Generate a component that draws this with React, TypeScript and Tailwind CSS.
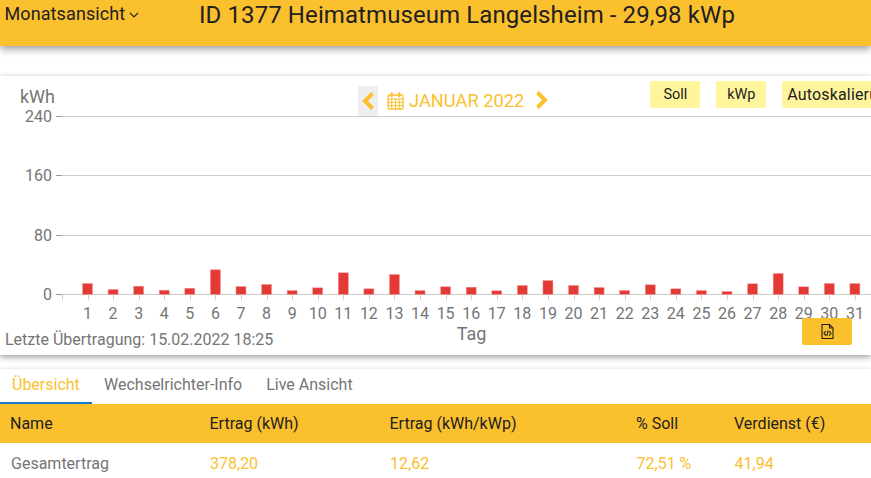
import React from "react";

const heights = [11, 5, 8.3, 4.3, 6.3, 24.7, 8, 10, 4, 6.7, 21.7, 5.7, 20, 4, 7.7, 7.3, 3.7, 9, 14, 9, 7, 4, 9.7, 5.7, 4, 3, 10.7, 21, 7.7, 11, 11];
const grid = [
  { label: "240", y: 11.5 },
  { label: "160", y: 70.5 },
  { label: "80", y: 130.5 },
  { label: "0", y: 189.5 },
];
const columns = ["Name", "Ertrag (kWh)", "Ertrag (kWh/kWp)", "% Soll", "Verdienst (€)"];
const values = ["Gesamtertrag", "378,20", "12,62", "72,51 %", "41,94"];

function Chart() {
  const baseline = 189.5;
  return (
    <svg width="871" height="240" className="block" style={{ fontFamily: "Roboto, sans-serif" }}>
      {grid.map((g) => (
        <g key={g.label}>
          <line x1="56" x2="871" y1={g.y} y2={g.y} stroke="#cccccc" />
          <line x1="56" x2="62" y1={g.y} y2={g.y} stroke="#999999" />
          <text x="52" y={g.y + 5.5} textAnchor="end" fontSize="16" fill="#757575">{g.label}</text>
        </g>
      ))}
      <line x1="62.5" x2="62.5" y1={baseline} y2={baseline + 5} stroke="#cccccc" />
      {heights.map((h, i) => {
        const cx = 87.5 + i * 25.58;
        return (
          <g key={i}>
            <rect x={cx - 5} y={baseline - h} width="10" height={h} fill="#e53935" stroke="#ef9a9a" strokeWidth="0.5" />
            <line x1={Math.round(cx) + 0.5} x2={Math.round(cx) + 0.5} y1={baseline} y2={baseline + 5} stroke="#cccccc" />
            <text x={cx} y={214} textAnchor="middle" fontSize="16" fill="#757575">{i + 1}</text>
          </g>
        );
      })}
      <text x="471.5" y="235" textAnchor="middle" fontSize="18" fill="#757575">Tag</text>
    </svg>
  );
}

function Calendar() {
  return (
    <svg width="17" height="18" viewBox="0 0 17 18" fill="none" stroke="#fbc02d" strokeWidth="1.3">
      <rect x="1" y="3" width="15" height="14" rx="1.5" />
      <path d="M1 7h15M1 10.3h15M1 13.6h15M4.7 7v10M8.5 7v10M12.3 7v10" strokeWidth="1" />
      <path d="M4.7 1v3.5M12.3 1v3.5" strokeWidth="2" strokeLinecap="round" />
    </svg>
  );
}

function Chevron({ dir }: { dir: "left" | "right" }) {
  return (
    <svg width="14" height="18" viewBox="0 0 14 18" fill="none" stroke="#fbc02d" strokeWidth="4">
      <path d={dir === "left" ? "M11.5 1.5 4 9l7.5 7.5" : "M2.5 1.5 10 9l-7.5 7.5"} />
    </svg>
  );
}

function FileCode() {
  return (
    <svg width="13" height="15" viewBox="0 0 13 15" fill="none" stroke="#212121" strokeWidth="1.1">
      <path d="M1 .5h7.5L12 4v10.5H1z" />
      <path d="M8.5 .5V4H12" />
      <path d="M4.8 7 3 9.3l1.8 2.3M8.2 7 10 9.3l-1.8 2.3M7.2 6.5 5.8 12" />
    </svg>
  );
}

export default function App() {
  return (
    <div className="w-[871px] h-[478px] overflow-hidden bg-white text-[#212121] font-['Roboto',sans-serif]">
      <header className="h-[45.5px] bg-[#fbc02d] shadow-[0_3px_8px_rgba(0,0,0,0.4)] flex items-start relative">
        <div className="w-[199px] pl-[4.5px] pt-[2px] flex items-center text-[18px] leading-[24px] tracking-[0.1px] text-[#212121]">
          Monatsansicht
          <svg width="10" height="6" viewBox="0 0 10 6" fill="none" stroke="#212121" strokeWidth="1.2" className="ml-[4px] mt-[2px]">
            <path d="M1 .8 5 4.8 9 .8" />
          </svg>
        </div>
        <h1 className="text-[24px] leading-[30px] font-normal whitespace-nowrap tracking-[0.09px]">ID 1377 Heimatmuseum Langelsheim - 29,98 kWp</h1>
      </header>

      <section className="mt-[30.5px] h-[279px] bg-white shadow-[0_2px_6px_rgba(0,0,0,0.4)] relative overflow-hidden">
        <div className="h-[29px] flex items-start relative z-10">
          <div className="w-[358px] shrink-0 pl-[20px] pt-[11px] text-[18px] leading-[20px] text-[#757575]">kWh</div>
          <div className="w-[20px] h-[30px] shrink-0 mt-[10px] bg-[#eeeeee] rounded-[2px] flex items-center justify-center">
            <Chevron dir="left" />
          </div>
          <div className="ml-[9px] mt-[14px] shrink-0 flex items-center gap-[5px] text-[#fbc02d] text-[18.3px] leading-[22px] whitespace-nowrap">
            <Calendar />
            JANUAR 2022
          </div>
          <div className="ml-[11px] mt-[15px] shrink-0"><Chevron dir="right" /></div>
          <div className="ml-[101px] mt-[5px] shrink-0 flex gap-[16px] text-[#212121]">
            <div className="w-[50px] h-[27px] bg-[#fff59d] rounded-[2px] flex items-center justify-center text-[14.5px]">Soll</div>
            <div className="w-[50px] h-[27px] bg-[#fff59d] rounded-[2px] flex items-center justify-center text-[14.5px]">kWp</div>
            <div className="w-[100px] h-[27px] bg-[#fff59d] rounded-[2px] pl-[5px] flex items-center text-[16px] tracking-[0.15px] whitespace-nowrap overflow-hidden">Autoskalierung</div>
          </div>
        </div>
        <Chart />
        <div className="absolute left-[5px] top-[254px] text-[16px] leading-[20px] text-[#757575] whitespace-nowrap">Letzte Übertragung: 15.02.2022 18:25</div>
        <button className="absolute left-[802px] top-[242px] w-[50px] h-[27px] bg-[#fbc02d] rounded-[2px] flex items-center justify-center">
          <FileCode />
        </button>
      </section>

      <section className="mt-[14px] bg-white shadow-[0_-1px_3px_rgba(0,0,0,0.1)]">
        <nav className="h-[35px] flex text-[16px] leading-[24px] text-[#757575]">
          <div className="w-[92px] pl-[12px] pt-[4px] border-b-2 border-[#1976d2] text-[#fbc02d]">Übersicht</div>
          <div className="pl-[12px] pt-[4px]">Wechselrichter-Info</div>
          <div className="pl-[24px] pt-[4px]">Live Ansicht</div>
        </nav>
        <div className="grid grid-cols-[199.5px_180px_246.5px_98px_1fr] items-center pl-[10px] h-[39px] bg-[#fbc02d] text-[16px] text-[#212121]">
          {columns.map((c) => <div key={c}>{c}</div>)}
        </div>
        <div className="grid grid-cols-[199px_180px_246.5px_98px_1fr] items-center pl-[11px] pt-[1px] h-[40px] text-[16px] text-[#fbc02d]">
          {values.map((v, i) => <div key={v} className={i === 0 ? "text-[#757575]" : ""}>{v}</div>)}
        </div>
      </section>
    </div>
  );
}
